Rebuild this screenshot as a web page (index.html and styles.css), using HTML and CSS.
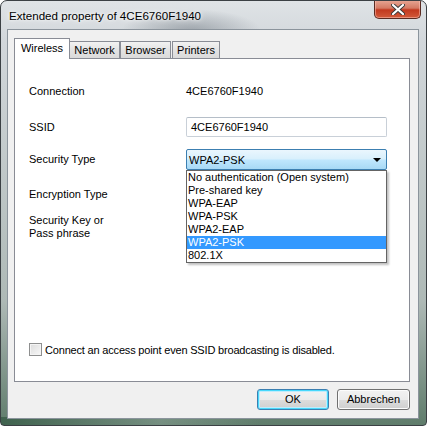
FILE: index.html
```html
<!DOCTYPE html>
<html lang="en">
<head>
    <meta charset="UTF-8">
    <meta name="viewport" content="width=device-width, initial-scale=1.0">
    <link rel="stylesheet" href="styles.css">
</head>
<body>
    <div class="window">
        <div class="titlebar">
            <span class="title">Extended property of 4CE6760F1940</span>
            <div class="close-btn">
                <svg width="14" height="11" viewBox="0 0 14 11">
                    <path d="M2 1 L12 10 M12 1 L2 10" stroke="#3a3a3a" stroke-width="4" stroke-linecap="round"/>
                    <path d="M2 1 L12 10 M12 1 L2 10" stroke="#ffffff" stroke-width="2.2" stroke-linecap="round"/>
                </svg>
            </div>
        </div>

        <div class="client">
            <div class="tabs">
                <div class="tab selected tab-wireless">Wireless</div>
                <div class="tab tab-network">Network</div>
                <div class="tab tab-browser">Browser</div>
                <div class="tab tab-printers">Printers</div>
            </div>

            <div class="panel">
                <div class="row row-connection">
                    <span class="label">Connection</span>
                    <span class="value">4CE6760F1940</span>
                </div>
                <div class="row row-ssid">
                    <span class="label">SSID</span>
                    <div class="textbox">4CE6760F1940</div>
                </div>
                <div class="row row-security">
                    <span class="label">Security Type</span>
                    <div class="combo-wrap">
                        <div class="combo">
                            <span>WPA2-PSK</span>
                            <span class="arrow"></span>
                        </div>
                        <ul class="droplist">
                            <li>No authentication (Open system)</li>
                            <li>Pre-shared key</li>
                            <li>WPA-EAP</li>
                            <li>WPA-PSK</li>
                            <li>WPA2-EAP</li>
                            <li class="active">WPA2-PSK</li>
                            <li>802.1X</li>
                        </ul>
                    </div>
                </div>
                <div class="row row-encryption">
                    <span class="label">Encryption Type</span>
                </div>
                <div class="row row-key">
                    <span class="label">Security Key or<br>Pass phrase</span>
                </div>

                <label class="check-row">
                    <span class="checkbox"></span>
                    <span class="check-text">Connect an access point even SSID broadcasting is disabled.</span>
                </label>
            </div>

            <div class="buttons">
                <div class="btn default">OK</div>
                <div class="btn">Abbrechen</div>
            </div>
        </div>
    </div>
</body>
</html>
```

FILE: styles.css
```css
body {
    margin: 0;
    font-family: "Liberation Sans", Arial, sans-serif;
    font-size: 11px;
    color: #000;
    background: #ffffff;
}
.window {
    width: 427px;
    height: 426px;
    box-sizing: border-box;
    border: 1px solid #3b4044;
    border-radius: 7px 7px 4px 4px;
    display: flex;
    flex-direction: column;
    overflow: hidden;
    background:
        radial-gradient(ellipse 70px 22px at 190px 30px, rgba(90, 100, 110, 0.45), rgba(90, 100, 110, 0) 100%),
        linear-gradient(to right, rgba(60, 95, 75, 0.9) 0, rgba(150, 170, 160, 0.4) 160px, rgba(220, 224, 228, 0) 260px) bottom / 100% 8px no-repeat,
        linear-gradient(to bottom, #dfe3e6 0, #d2d7db 40px, #aeb9b6 300px, #5f7c6b 100%);
}
.titlebar {
    height: 28px;
    display: flex;
    align-items: flex-start;
    padding-left: 8px;
    padding-right: 5px;
}
.title {
    font-size: 11.6px;
    line-height: 12px;
    margin-top: 9px;
    color: #000;
    text-shadow: 0 0 6px #ffffff, 0 0 3px #ffffff;
}
.close-btn {
    margin-left: auto;
    margin-top: -1px;
    width: 47px;
    height: 19px;
    box-sizing: border-box;
    border: 1px solid #5a2b22;
    border-top: none;
    border-radius: 0 0 5px 5px;
    background: linear-gradient(to bottom, #e8a896 0, #d47a64 45%, #c2391f 55%, #d25a3a 100%);
    box-shadow: inset 0 0 0 1px rgba(255, 200, 190, 0.5);
    display: flex;
    align-items: center;
    justify-content: center;
}
.client {
    flex: 1;
    margin: 0 7px 6px 6px;
    border: 1px solid #8b949c;
    background: #f0f0f0;
    padding: 8px 8px 8px 6px;
    display: flex;
    flex-direction: column;
}
.tabs {
    display: flex;
    align-items: flex-end;
    height: 20px;
    position: relative;
    z-index: 1;
}
.tab {
    height: 17px;
    line-height: 17px;
    box-sizing: border-box;
    text-align: center;
    border: 1px solid #898c95;
    border-bottom: none;
    background: linear-gradient(to bottom, #f2f2f2, #e3e3e3 50%, #dadada);
    color: #000;
}
.tab.selected {
    height: 21px;
    line-height: 19px;
    background: #ffffff;
    margin-bottom: -1px;
}
.tab-wireless { width: 56px; }
.tab-network { width: 51px; margin-left: -1px; }
.tab-browser { width: 51px; }
.tab-printers { width: 48px; margin-left: 1px; }
.panel {
    flex: 1;
    background: #ffffff;
    border: 1px solid #898c95;
    padding: 22px 14px 25px 14px;
    display: flex;
    flex-direction: column;
}
.row {
    display: flex;
    align-items: center;
    height: 20px;
}
.label {
    width: 157px;
    flex-shrink: 0;
    line-height: 13px;
}
.row-ssid { margin-top: 16px; }
.row-security { margin-top: 12px; height: 21px; }
.row-encryption { margin-top: 14px; }
.row-key { margin-top: 10px; height: 26px; }
.textbox {
    width: 201px;
    height: 20px;
    box-sizing: border-box;
    border: 1px solid #c9d0d8;
    border-top-color: #b5bec8;
    border-radius: 2px;
    padding-left: 4px;
    line-height: 18px;
}
.combo-wrap {
    position: relative;
    width: 201px;
}
.combo {
    height: 21px;
    box-sizing: border-box;
    border: 1px solid #3c7fb1;
    border-radius: 2px;
    background: linear-gradient(to bottom, #eaf6fd 0, #d9f0fc 45%, #bee6fd 55%, #a7d9f5 100%);
    display: flex;
    align-items: center;
    padding-left: 2px;
    padding-right: 5px;
}
.arrow {
    margin-left: auto;
    width: 0;
    height: 0;
    border-left: 4px solid transparent;
    border-right: 4px solid transparent;
    border-top: 4px solid #000;
}
.droplist {
    position: absolute;
    top: 21px;
    left: 0;
    width: 201px;
    box-sizing: border-box;
    margin: 0;
    padding: 0;
    list-style: none;
    background: #ffffff;
    border: 1px solid #646464;
    box-shadow: 2px 2px 2px rgba(0, 0, 0, 0.25);
    z-index: 2;
}
.droplist li {
    height: 13px;
    line-height: 13px;
    padding-left: 1px;
}
.droplist li.active {
    background: #3399ff;
    color: #ffffff;
}
.check-row {
    margin-top: auto;
    display: flex;
    align-items: center;
    gap: 3px;
    height: 13px;
}
.check-text {
    letter-spacing: -0.18px;
}
.checkbox {
    width: 13px;
    height: 13px;
    box-sizing: border-box;
    border: 1px solid #8e8f8f;
    background: linear-gradient(135deg, #dcdcdc, #f8f8f8);
    box-shadow: inset 0 0 0 1px #f4f4f4;
}
.buttons {
    display: flex;
    justify-content: flex-end;
    gap: 8px;
    margin-top: 7px;
}
.btn {
    width: 73px;
    height: 21px;
    box-sizing: border-box;
    border: 1px solid #707070;
    border-radius: 3px;
    background: linear-gradient(to bottom, #f2f2f2 0, #ebebeb 50%, #dddddd 51%, #cfcfcf 100%);
    box-shadow: inset 0 0 0 1px #fcfcfc;
    text-align: center;
    line-height: 19px;
}
.btn.default {
    width: 72px;
    border-color: #3c7fb1;
    box-shadow: inset 0 0 0 1px #48d8fb, inset 0 0 0 2px #c0ecfc;
}
```
